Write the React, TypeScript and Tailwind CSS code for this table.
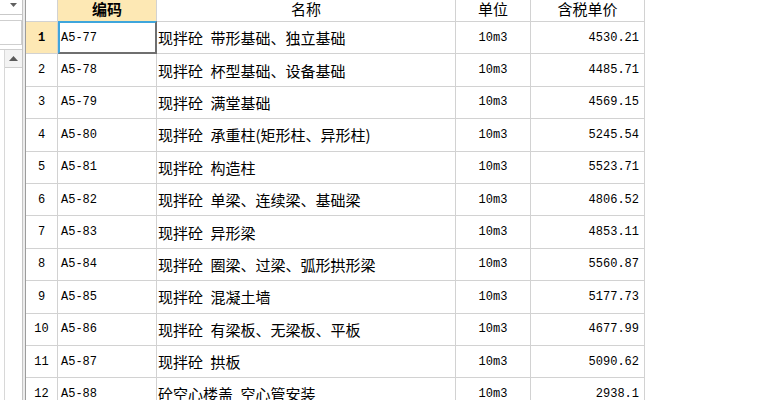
import React from "react";

const rows = [
  { code: "A5-77", name: "现拌砼 带形基础、独立基础", unit: "10m3", price: "4530.21" },
  { code: "A5-78", name: "现拌砼 杯型基础、设备基础", unit: "10m3", price: "4485.71" },
  { code: "A5-79", name: "现拌砼 满堂基础", unit: "10m3", price: "4569.15" },
  { code: "A5-80", name: "现拌砼 承重柱(矩形柱、异形柱)", unit: "10m3", price: "5245.54" },
  { code: "A5-81", name: "现拌砼 构造柱", unit: "10m3", price: "5523.71" },
  { code: "A5-82", name: "现拌砼 单梁、连续梁、基础梁", unit: "10m3", price: "4806.52" },
  { code: "A5-83", name: "现拌砼 异形梁", unit: "10m3", price: "4853.11" },
  { code: "A5-84", name: "现拌砼 圈梁、过梁、弧形拱形梁", unit: "10m3", price: "5560.87" },
  { code: "A5-85", name: "现拌砼 混凝土墙", unit: "10m3", price: "5177.73" },
  { code: "A5-86", name: "现拌砼 有梁板、无梁板、平板", unit: "10m3", price: "4677.99" },
  { code: "A5-87", name: "现拌砼 拱板", unit: "10m3", price: "5090.62" },
  { code: "A5-88", name: "砼空心楼盖 空心管安装", unit: "10m3", price: "2938.1" },
];

const mono = "font-['Liberation_Mono',monospace] text-[12px]";
const cjk = "font-['Noto_Sans_CJK_SC',sans-serif]";

function Name({ text }: { text: string }) {
  const [head, ...rest] = text.split(" ");
  return (
    <span className={`${cjk} text-[15px] leading-none whitespace-nowrap`}>
      {head}
      <span className="inline-block w-[7.5px]" />
      {rest.join(" ")}
    </span>
  );
}

function LeftPanel() {
  return (
    <div className="flex h-full shrink-0">
      <div className="flex h-full w-[22px] flex-col">
        <div className="flex h-[15px] items-start justify-center border-b border-[#c9c9c9] pt-[3px] pl-[4px]">
          <svg width="7" height="4" viewBox="0 0 7 4">
            <path d="M0 0h7L3.5 4z" fill="#606060" />
          </svg>
        </div>
        <div className="mt-[5px] h-[25px] border border-l-0 border-[#cfcfcf]" />
        <div className="mt-[4px] flex flex-1 border-t border-[#cfcfcf]">
          <div className="w-[4px]" />
          <div className="flex flex-1 flex-col border-l border-[#d8d8d8] bg-white">
            <div className="flex h-[18px] items-center justify-center border-b border-[#cfcfcf] bg-[#f3f3f3]">
              <svg width="9" height="5" viewBox="0 0 9 5">
                <path d="M0 5h9L4.5 0z" fill="#5a5a5a" />
              </svg>
            </div>
            <div className="flex-1 bg-white" />
          </div>
        </div>
      </div>
      <div className="h-full w-[4px] border-l border-r border-l-[#c4c4c4] border-r-[#9c9c9c] bg-[#ececec]" />
    </div>
  );
}

export default function App() {
  return (
    <div className="flex h-[400px] w-[779px] overflow-hidden bg-white text-black">
      <LeftPanel />
      <div className="flex flex-col">
        <div className="flex h-[22px] shrink-0 border-b border-[#d2d2d2]">
          <div className="w-[32px] border-r border-[#d2d2d2]" />
          <div className={`${cjk} w-[99px] border-r border-[#d2d2d2] bg-[#fde8b4] pt-[1px] text-center text-[15px] font-bold leading-[15px]`}>
            编码
          </div>
          <div className={`${cjk} w-[299px] border-r border-[#d2d2d2] pt-[1px] text-center text-[15px] leading-[15px]`}>
            名称
          </div>
          <div className={`${cjk} w-[75px] border-r border-[#d2d2d2] pt-[1px] text-center text-[15px] leading-[15px]`}>
            单位
          </div>
          <div className={`${cjk} w-[114px] border-r border-[#d2d2d2] pt-[1px] text-center text-[15px] leading-[15px]`}>
            含税单价
          </div>
        </div>
        {rows.map((r, i) => (
          <div key={r.code} className="flex h-[32.4px] shrink-0 border-b border-[#d2d2d2]">
            <div
              className={`flex w-[32px] items-center justify-center border-r border-[#d2d2d2] ${mono} ${
                i === 0 ? "bg-[#fde8b4] font-bold" : ""
              }`}
            >
              {i + 1}
            </div>
            <div className={`relative flex w-[99px] items-center border-r border-[#d2d2d2] pl-[3px] ${mono}`}>
              {i === 0 && (
                <div className="absolute -top-[1px] left-0 -right-[1px] -bottom-[1px] border-2 border-t-[#3fa6dc] border-l-[#3fa6dc] border-r-[#6f6f6f] border-b-[#6f6f6f]" />
              )}
              {r.code}
            </div>
            <div className="flex w-[299px] items-center border-r border-[#d2d2d2] pl-[1px]">
              <Name text={r.name} />
            </div>
            <div className={`flex w-[75px] items-center justify-center border-r border-[#d2d2d2] ${mono}`}>
              {r.unit}
            </div>
            <div className={`flex w-[114px] items-center justify-end border-r border-[#d2d2d2] pr-[5px] ${mono}`}>
              {r.price}
            </div>
          </div>
        ))}
      </div>
    </div>
  );
}
